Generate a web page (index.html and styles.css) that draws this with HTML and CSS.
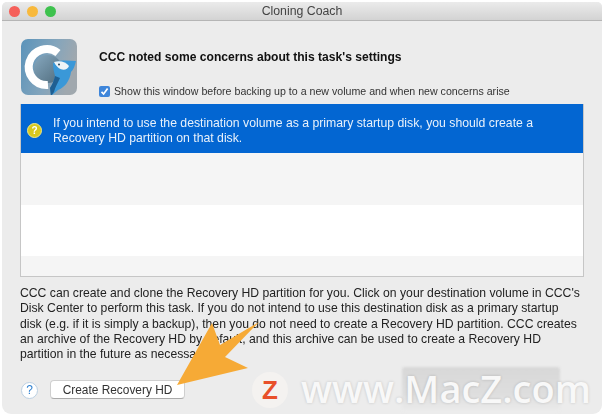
FILE: index.html
```html
<!DOCTYPE html>
<html lang="en">
<head>
    <meta charset="UTF-8">
    <title>Cloning Coach</title>
    <link rel="stylesheet" href="styles.css">
</head>
<body>
<div class="window">
    <div class="titlebar">
        <div class="lights">
            <span class="light red"></span>
            <span class="light yellow"></span>
            <span class="light green"></span>
        </div>
        <div class="title">Cloning Coach</div>
    </div>
    <div class="content">
        <div class="header">
            <svg class="app-icon" width="56" height="56" viewBox="0 0 56 56">
                <defs>
                    <linearGradient id="tile" x1="0" y1="0" x2="1" y2="0.3">
                        <stop offset="0" stop-color="#5a93ba"/>
                        <stop offset="0.6" stop-color="#84a5bc"/>
                        <stop offset="1" stop-color="#a0a8ae"/>
                    </linearGradient>
                    <linearGradient id="hollow" x1="0" y1="0" x2="1" y2="1">
                        <stop offset="0" stop-color="#86a8bf"/>
                        <stop offset="1" stop-color="#4f6b7c"/>
                    </linearGradient>
                </defs>
                <rect width="56" height="56" rx="7" fill="url(#tile)"/>
                <circle cx="27" cy="30" r="14" fill="url(#hollow)"/>
                <path d="M37 14 A18 18 0 1 0 27 46" fill="none" stroke="#fff" stroke-width="8"/>
                <path d="M32 24 C40 20 48 22 55 22 C54 27 52 31 50 33 C49 42 43 49 37 51 L30 57 L29 49 C31 46 33 42 34 37 C33 33 32 29 32 24 Z" fill="#3a98d8"/>
                <path d="M33 23 C39 21 45 23 48 27 C46 32 38 33 33 23 Z" fill="#eef4f7"/>
                <circle cx="38" cy="25.500" r="1" fill="#24425a"/>
                <path d="M34 37 C33 42 31 46 29 49 L30 57 L33 53 C34 48 37 44 39 39 Z" fill="#1f5f92"/>
            </svg>
            <div class="header-text">
                <div class="heading">CCC noted some concerns about this task's settings</div>
                <label class="show-again">
                    <span class="checkbox">
                        <svg width="9" height="9" viewBox="0 0 9 9"><path d="M1.5 4.8 L3.6 7 L7.6 1.6" fill="none" stroke="#fff" stroke-width="1.7"/></svg>
                    </span>
                    Show this window before backing up to a new volume and when new concerns arise
                </label>
            </div>
        </div>
        <div class="list">
            <div class="row selected">
                <span class="warn">?</span>
                <div>If you intend to use the destination volume as a primary startup disk, you should create a<br>Recovery HD partition on that disk.</div>
            </div>
            <div class="row odd"></div>
            <div class="row even"></div>
            <div class="row odd short"></div>
        </div>
        <p class="desc">CCC can create and clone the Recovery HD partition for you. Click on your destination volume in CCC's<br>Disk Center to perform this task. If you do not intend to use this destination disk as a primary startup<br>disk (e.g. if it is simply a backup), then you do not need to create a Recovery HD partition. CCC creates<br>an archive of the Recovery HD by default, and this archive can be used to create a Recovery HD<br>partition in the future as necessary.</p>
        <div class="footer">
            <span class="help">?</span>
            <button class="btn">Create Recovery HD</button>
        </div>
    </div>
</div>

<!-- arrow and watermark sit on top of the window -->
<svg class="arrow" width="90" height="75" viewBox="0 0 90 75">
    <path d="M7 70 L42 8 L50 30 L89 7 L55 42 L78 53 Z" fill="#f6aa36"/>
</svg>
<div class="mark-patch"></div>
<div class="mark-logo">Z</div>
<div class="mark-text">www.MacZ.com</div>
</body>
</html>
```

FILE: styles.css
```css
body, html {
    margin: 0;
    padding: 0;
    height: 100%;
    background: #fff;
    overflow: hidden;
}

body {
    padding: 2px 8px 3px 2px;
    box-sizing: border-box;
    font-family: "Liberation Sans", Arial, sans-serif;
    color: #1d1d1d;
}

.window {
    height: 412px;
    background: #ececec;
    border-radius: 5px 5px 9px 9px;
    overflow: hidden;
    filter: blur(0.35px);
}

.titlebar {
    height: 18px;
    padding: 0 7px;
    display: flex;
    align-items: center;
    background: linear-gradient(#ebebeb, #d3d3d3);
    border-bottom: 1px solid #b5b5b5;
}

.lights {
    display: flex;
    gap: 7px;
    position: absolute;
}

.light {
    width: 11px;
    height: 11px;
    border-radius: 50%;
}
.red { background: #f5605a; }
.yellow { background: #f8b93c; }
.green { background: #3ec24e; }

.title {
    flex: 1;
    text-align: center;
    font-size: 12.3px;
    color: #444;
}

.content {
    padding: 18px 18px 0 18px;
}

.header {
    display: flex;
    height: 65px;
    padding-left: 1px;
}

.app-icon {
    flex: none;
    margin-right: 22px;
}

.header-text {
    padding-top: 11px;
}

.heading {
    font-size: 12.1px;
    font-weight: bold;
    color: #111;
}

.show-again {
    display: flex;
    align-items: center;
    gap: 4px;
    margin-top: 21px;
    font-size: 10.63px;
    color: #333;
    white-space: nowrap;
}

.checkbox {
    width: 11px;
    height: 11px;
    border-radius: 2px;
    background: #3f86da;
    display: flex;
    align-items: center;
    justify-content: center;
}

.list {
    width: 564px;
    height: 173px;
    border: 1px solid #c6c6c6;
    border-top: 0;
    box-sizing: border-box;
    background: #f5f5f5;
}

.row {
    height: 52px;
}
.row.selected {
    height: 49px;
    box-sizing: border-box;
    display: flex;
    align-items: center;
    gap: 11px;
    padding: 4px 0 0 6px;
    background: #0366d2;
    color: #e8f1fb;
    font-size: 12.25px;
    line-height: 15px;
    white-space: nowrap;
}
.row.odd { background: #f5f5f5; }
.row.even { background: #fff; height: 51px; }
.row.short { height: 20px; }

.warn {
    width: 15px;
    height: 15px;
    flex: none;
    border-radius: 50%;
    background: #d8c81e;
    border: 1px solid #efe88a;
    box-sizing: border-box;
    color: #fff;
    font-size: 10px;
    font-weight: bold;
    line-height: 13px;
    text-align: center;
}

.desc {
    margin: 9px 0 0 0;
    font-size: 12.19px;
    line-height: 15.25px;
    color: #222;
    white-space: nowrap;
}

.footer {
    display: flex;
    align-items: flex-end;
    gap: 12px;
    margin-top: 18px;
    padding-left: 1px;
}

.help {
    width: 17px;
    height: 17px;
    box-sizing: border-box;
    border-radius: 50%;
    background: #fff;
    border: 1px solid #bcd0e2;
    color: #2c7fd0;
    font-size: 12px;
    line-height: 15px;
    text-align: center;
}

.btn {
    width: 135px;
    height: 19px;
    padding: 0;
    background: #fff;
    border: 1px solid #cfcfcf;
    border-bottom-color: #aaa;
    border-radius: 4px;
    font-family: inherit;
    font-size: 11.9px;
    color: #333;
}

.arrow {
    position: absolute;
    left: 170px;
    top: 315px;
}

.mark-patch {
    position: absolute;
    left: 402px;
    top: 367px;
    width: 158px;
    height: 45px;
    background: linear-gradient(#d8d8d8, #dedede 60%, #ececec);
    border-radius: 3px;
    filter: blur(1px);
}

.mark-logo {
    position: absolute;
    left: 252px;
    top: 372px;
    width: 36px;
    height: 36px;
    border-radius: 50%;
    background: #f4f2f0;
    color: #e8502a;
    font-size: 26px;
    font-weight: bold;
    line-height: 36px;
    text-align: center;
}

.mark-text {
    position: absolute;
    left: 301px;
    top: 363px;
    font-family: "Open Sans", sans-serif;
    font-size: 38px;
    font-weight: 600;
    line-height: 50px;
    color: #f8f8f8;
    white-space: nowrap;
    text-shadow: 0 0 3px rgba(0, 0, 0, 0.18);
}
```
